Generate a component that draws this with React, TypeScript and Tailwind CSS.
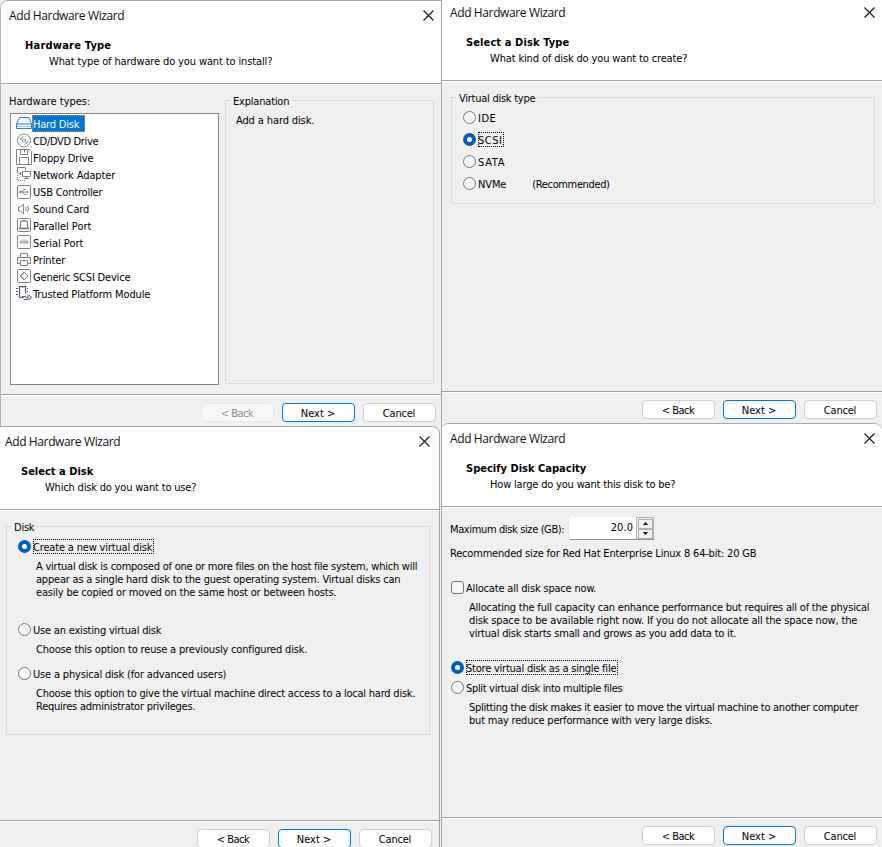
import { useLayoutEffect, useRef, useState, type ReactNode } from "react";

type TProps = { w: number; children: string; className?: string };

/** A single line of text, tracked so that it fills exactly `w` pixels. */
function T({ w, children, className = "leading-[15px]" }: TProps) {
  const ref = useRef<HTMLSpanElement>(null);
  const [tracking, setTracking] = useState(0);
  useLayoutEffect(() => {
    const el = ref.current;
    if (!el) return;
    el.style.letterSpacing = "0px";
    setTracking((w + 0.3 - el.getBoundingClientRect().width) / children.length);
    el.style.letterSpacing = "";
  }, [w, children]);
  return (
    <span className={`block h-[13px] whitespace-pre ${className}`}>
      <span ref={ref} style={{ letterSpacing: `${tracking}px` }}>
        {children}
      </span>
    </span>
  );
}

function Close() {
  return (
    <svg className="-mt-[2px] h-[11px] w-[11px]" viewBox="0 0 11 11" fill="none" stroke="#1a1a1a" strokeWidth="1.15">
      <path d="M.5.5l10 10M10.5.5l-10 10" />
    </svg>
  );
}

function Button({ label, w, kind = "normal" }: { label: string; w: number; kind?: "normal" | "primary" | "disabled" }) {
  const look =
    kind === "primary"
      ? "border-[#0078d4] bg-[#fdfdfd] text-black"
      : kind === "disabled"
        ? "border-[#e8e8e8] bg-[#f7f7f7] text-[#8e8e8e]"
        : "border-[#d0d0d0] bg-[#fdfdfd] text-black";
  return (
    <button className={`flex h-[19px] w-[73px] items-center justify-center rounded-[4px] border pr-px ${look}`}>
      <T w={w}>{label}</T>
    </button>
  );
}

type DialogProps = {
  heading: string;
  headingW: number;
  question: string;
  questionW: number;
  backDisabled?: boolean;
  className?: string;
  children: ReactNode;
};

function Dialog({ heading, headingW, question, questionW, backDisabled, className = "", children }: DialogProps) {
  return (
    <section className={`flex h-[426px] shrink-0 flex-col overflow-hidden border-t border-[#aaa] bg-[#f0f0f0] ${className}`}>
      <header className="h-[82px] shrink-0 bg-white">
        <div className="flex h-[30px] w-[441px] items-center justify-between pr-[7.500px] pl-[9px]">
          <T w={115} className="-mt-px font-['Open_Sans','Noto_Sans',sans-serif] text-[12px] leading-[13px] text-[#111] [font-stretch:normal]">
            Add Hardware Wizard
          </T>
          <Close />
        </div>
        <div className="pt-[7px] pl-[25px]">
          <T w={headingW} className="leading-[15px] font-bold">{heading}</T>
          <div className="pt-[3px] pl-[24px]">
            <T w={questionW}>{question}</T>
          </div>
        </div>
      </header>
      <div className="h-[2px] shrink-0 border-t border-[#a0a0a0] bg-white" />
      <div className="h-[309px] shrink-0">{children}</div>
      <div className="h-[2px] shrink-0 border-t border-[#a0a0a0] bg-white" />
      <footer className="flex w-[436px] shrink-0 justify-end gap-2 pt-[7px]">
        <Button label="< Back" w={32} kind={backDisabled ? "disabled" : "normal"} />
        <Button label="Next >" w={34} kind="primary" />
        <Button label="Cancel" w={32} />
      </footer>
    </section>
  );
}

function Group({ label, labelW, className, children }: { label: string; labelW: number; className: string; children: ReactNode }) {
  return (
    <div className={`border border-[#dcdcdc] ${className}`}>
      <div className="-mt-[7px] ml-[5px] w-fit bg-[#f0f0f0] px-[2px]">
        <T w={labelW}>{label}</T>
      </div>
      {children}
    </div>
  );
}

function Option({ label, w, checked, square, children }: { label: string; w: number; checked?: boolean; square?: boolean; children?: ReactNode }) {
  return (
    <div className="flex h-[15px] items-center">
      <span
        className={`flex h-[13px] w-[13px] items-center justify-center ${square ? "rounded-[3px]" : "rounded-full"} ${
          checked ? "bg-[#005fb8]" : "border border-[#767676] bg-[#f6f6f6]"
        }`}
      >
        {checked && <span className="h-[5px] w-[5px] rounded-full bg-white" />}
      </span>
      <span className={`ml-[2px] flex h-[15px] items-center border ${checked ? "border-dotted border-black" : "border-transparent"}`}>
        <T w={w} className="-ml-px pr-px leading-[15px]">{label}</T>
      </span>
      {children}
    </div>
  );
}

const hardware: { name: string; w: number; icon: ReactNode }[] = [
  {
    name: "Hard Disk",
    w: 46,
    icon: (
      <g stroke="#3d7fb5">
        <path d="M3.5 1.5h9.5l2.5 6.500h-15zM.5 8v4.500h15v-4.500" fill="#eef5fb" />
        <path d="M1 10.5h14" stroke="#a9cbe6" />
      </g>
    ),
  },
  {
    name: "CD/DVD Drive",
    w: 65,
    icon: (
      <g>
        <circle cx="8" cy="7.500" r="6.5" />
        <circle cx="8" cy="7.5" r="1.5" />
        <path d="M4.300 7a4 4 0 0 1 3-3.300M11.700 8a4 4 0 0 1-3 3.300" />
      </g>
    ),
  },
  {
    name: "Floppy Drive",
    w: 60,
    icon: <path d="M.5-.5h13l2 2v13H.5zM4.5-.5v5h7v-5M8.500 0v2.500M3.500 14.500v-7h9v7" />,
  },
  {
    name: "Network Adapter",
    w: 82,
    icon: (
      <g>
        <path d="M1.5 6v-5.500h8v3" />
        <path d="M1.5 8v5.500h8" strokeDasharray="1 1" />
        <path d="M6.500 4.500h8v5h-8zM10.500 9.500v2M8 11.500h5" />
        <path d="M2 6.500h3M4.500 5v3" />
      </g>
    ),
  },
  {
    name: "USB Controller",
    w: 69,
    icon: (
      <g>
        <rect x="1.5" y="1.5" width="13" height="13" rx="1" />
        <path d="M3.5 8h8M6 8l1.500-2.500h2M7 8l1.500 2.500h2" strokeWidth=".9" />
        <circle cx="4.5" cy="8" r=".8" fill="#808080" />
        <path d="M11 7l1.500 1-1.500 1z" fill="#808080" strokeWidth=".5" />
      </g>
    ),
  },
  {
    name: "Sound Card",
    w: 56,
    icon: <path d="M2.500 6h2l3-3v10l-3-3h-2zM9.500 6q1.300 2 0 4M11.500 5q2 3 0 6" />,
  },
  {
    name: "Parallel Port",
    w: 58,
    icon: (
      <g>
        <rect x="1.5" y=".5" width="13" height="13" rx="1" />
        <path d="M4.500 10.500v-6.500l1-1h5l1 1v6.500M3 10.500h10" strokeWidth="1.3" />
      </g>
    ),
  },
  {
    name: "Serial Port",
    w: 50,
    icon: (
      <g>
        <rect x="1.5" y=".5" width="13" height="13" rx="1" />
        <circle cx="5.200" cy="7" r="1.2" />
        <circle cx="10.800" cy="7" r="1.2" />
        <path d="M8 4.500v5" />
      </g>
    ),
  },
  {
    name: "Printer",
    w: 32,
    icon: <path d="M4.5 5.500v-4h7v4M4.500 11.500h-3v-6h13v6h-3M4.500 8.500h7v5h-7z" />,
  },
  {
    name: "Generic SCSI Device",
    w: 97,
    icon: (
      <g>
        <rect x="1.5" y=".5" width="13" height="13" rx="1" />
        <path d="M8 3l4 4-4 4-4-4zM8 5.2A2 2 0 1 0 8 9" strokeWidth=".9" />
      </g>
    ),
  },
  {
    name: "Trusted Platform Module",
    w: 117,
    icon: (
      <g stroke="#4a5560">
        <path d="M3.5 11.500v-11h2q1 1.500 2 0h2v7M3.500 11.500h4" strokeWidth="1.2" />
        <path d="M0 2.500h2M0 5.500h2M0 8.500h2M11 2.500h1M11 5.500h1" />
        <circle cx="13.200" cy="11.500" r="1.900" />
        <path d="M6 10.500h3l2 1.500M7.500 13.500h4" />
      </g>
    ),
  },
];

function HardwareTypePage() {
  return (
    <div className="flex gap-[6px] pl-[9px]">
      <div className="w-[210px] pt-[9px]">
        <T w={81}>Hardware types:</T>
        <ul className="mt-[6px] ml-px h-[272px] w-[209px] border border-[#828790] bg-white pt-[1px] pl-[5px]">
          {hardware.map((item, i) => (
            <li key={item.name} className="flex h-[17px] items-center">
              <svg className="mt-px h-4 w-4 shrink-0 overflow-visible" viewBox="0 0 16 16" fill="none" stroke="#808080">
                {item.icon}
              </svg>
              <span
                className={
                  i === 0
                    ? "flex h-[17px] w-[53px] items-center border border-dotted border-[#ff8728] bg-[#0078d7] text-white"
                    : "flex h-[17px] items-center border border-transparent"
                }
              >
                <T w={item.w}>{item.name}</T>
              </span>
            </li>
          ))}
        </ul>
      </div>
      <Group label="Explanation" labelW={56} className="mt-[15px] h-[284px] w-[209px]">
        <div className="pt-[6px] pl-[10px]">
          <T w={78}>Add a hard disk.</T>
        </div>
      </Group>
    </div>
  );
}

function DiskTypePage() {
  return (
    <div className="pt-[15px] pl-[10px]">
      <Group label="Virtual disk type" labelW={76} className="h-[107px] w-[424px]">
        <div className="flex flex-col gap-[7px] pt-[6px] pl-[11px]">
          <Option label="IDE" w={18} />
          <Option label="SCSI" w={24} checked />
          <Option label="SATA" w={27} />
          <Option label="NVMe" w={28}>
            <div className="pl-[24px]">
              <T w={77}>(Recommended)</T>
            </div>
          </Option>
        </div>
      </Group>
    </div>
  );
}

function SelectDiskPage() {
  return (
    <div className="pt-[15px] pl-[10px]">
      <Group label="Disk" labelW={20} className="h-[209px] w-[424px]">
        <div className="pt-[6px] pl-[11px]">
          <Option label="Create a new virtual disk" w={119} checked />
          <div className="pt-[5px] pl-[18px]">
            <T w={381}>A virtual disk is composed of one or more files on the host file system, which will</T>
            <T w={364}>appear as a single hard disk to the guest operating system. Virtual disks can</T>
            <T w={300}>easily be copied or moved on the same host or between hosts.</T>
          </div>
          <div className="pt-[24px]">
            <Option label="Use an existing virtual disk" w={128} />
          </div>
          <div className="pt-[5px] pl-[18px]">
            <T w={271}>Choose this option to reuse a previously configured disk.</T>
          </div>
          <div className="pt-[11px]">
            <Option label="Use a physical disk (for advanced users)" w={193} />
          </div>
          <div className="pt-[5px] pl-[18px]">
            <T w={379}>Choose this option to give the virtual machine direct access to a local hard disk.</T>
            <T w={159}>Requires administrator privileges.</T>
          </div>
        </div>
      </Group>
    </div>
  );
}

function SpinButton({ up }: { up?: boolean }) {
  return (
    <span className="flex h-[10px] w-[15px] items-center justify-center border border-[#b0b0b0] bg-[#f0f0f0]">
      <svg className="h-[3px] w-[5px]" viewBox="0 0 5 3">
        <path d={up ? "M0 3L2.5 0 5 3z" : "M0 0h5L2.5 3z"} fill="#000" />
      </svg>
    </span>
  );
}

function CapacityPage() {
  return (
    <div className="pt-[9px] pl-[9px]">
      <div className="flex h-[23px] items-center">
        <T w={114} className="w-[120px] leading-[16px]">Maximum disk size (GB):</T>
        <div className="flex h-[23px] border-b border-[#909090] bg-white">
          <div className="flex w-[66px] justify-end pt-[3px] pr-[3px]">
            <T w={22}>20.0</T>
          </div>
          <div className="flex w-[18px] flex-col items-center justify-center border border-b-0 border-[#b0b0b0] bg-[#f0f0f0]">
            <SpinButton up />
            <SpinButton />
          </div>
        </div>
      </div>
      <div className="pt-[6px] pb-px">
        <T w={306}>Recommended size for Red Hat Enterprise Linux 8 64-bit: 20 GB</T>
      </div>
      <div className="pt-[20px] pl-px">
        <Option label="Allocate all disk space now." w={130} square />
      </div>
      <div className="pt-[5px] pl-[19px]">
        <T w={400}>Allocating the full capacity can enhance performance but requires all of the physical</T>
        <T w={388}>disk space to be available right now. If you do not allocate all the space now, the</T>
        <T w={267}>virtual disk starts small and grows as you add data to it.</T>
      </div>
      <div className="pt-[21px] pl-px">
        <Option label="Store virtual disk as a single file" w={150} checked />
      </div>
      <div className="pt-[5px] pl-px">
        <Option label="Split virtual disk into multiple files" w={156} />
      </div>
      <div className="pt-[5px] pl-[19px]">
        <T w={389}>Splitting the disk makes it easier to move the virtual machine to another computer</T>
        <T w={243}>but may reduce performance with very large disks.</T>
      </div>
    </div>
  );
}

export default function App() {
  return (
    <main className="flex h-[847px] w-[882px] overflow-hidden bg-[#f0f0f0] font-['DejaVu_Sans_Condensed','DejaVu_Sans',sans-serif] text-[11px] text-black [font-stretch:condensed]">
      <div className="flex w-[441px] shrink-0 flex-col overflow-hidden">
        <Dialog
          heading="Hardware Type"
          headingW={86}
          question="What type of hardware do you want to install?"
          questionW={223}
          backDisabled
          className="relative w-[450px] rounded-tl-[8px] after:absolute after:inset-0 after:rounded-tl-[7px] after:border-l after:border-[#b4b4b4]"
        >
          <HardwareTypePage />
        </Dialog>
        <Dialog
          heading="Select a Disk"
          headingW={72}
          question="Which disk do you want to use?"
          questionW={151}
          className="-ml-1 w-[444px] rounded-tr-[8px] border-r border-r-[#a5a5a5]"
        >
          <SelectDiskPage />
        </Dialog>
      </div>
      <div className="w-[441px] shrink-0 overflow-hidden border-l border-[#a5a5a5]">
        <div className="-mt-[3px] -ml-px">
          <Dialog
            heading="Select a Disk Type"
            headingW={103}
            question="What kind of disk do you want to create?"
            questionW={197}
          >
            <DiskTypePage />
          </Dialog>
          <Dialog
            heading="Specify Disk Capacity"
            headingW={120}
            question="How large do you want this disk to be?"
            questionW={185}
            className="rounded-t-[8px]"
          >
            <CapacityPage />
          </Dialog>
        </div>
      </div>
    </main>
  );
}
